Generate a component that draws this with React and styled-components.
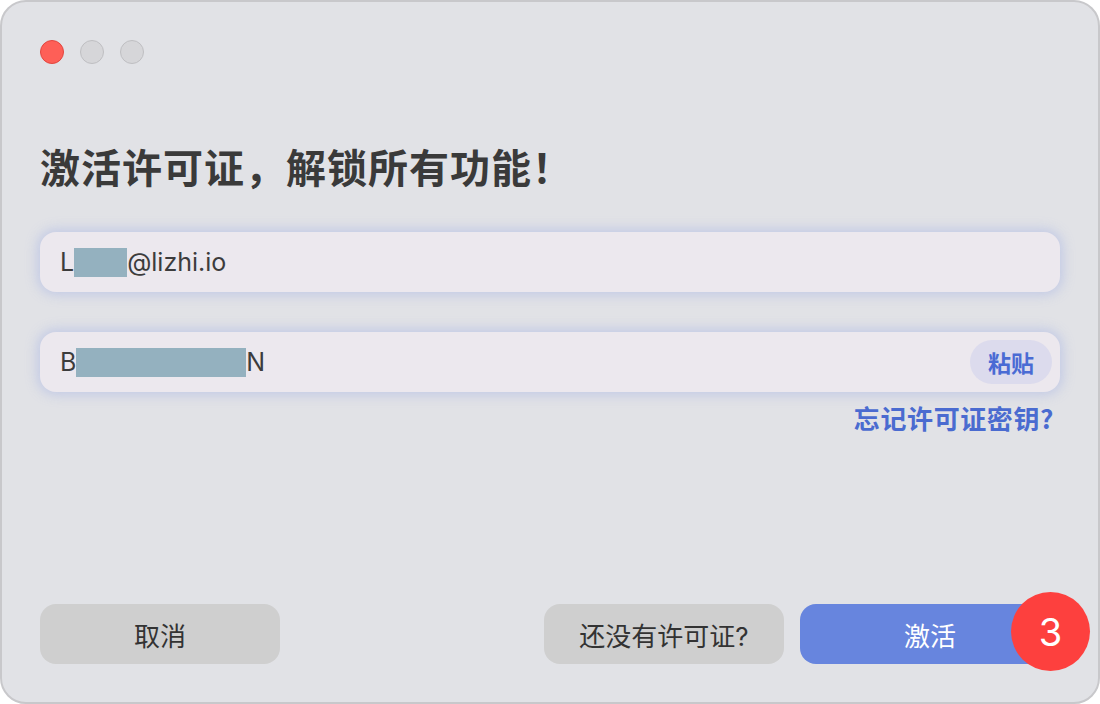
import React from "react";
import styled, { createGlobalStyle } from "styled-components";

const Global = createGlobalStyle`
  html, body { margin: 0; padding: 0; background: #ffffff; }
  body { font-family: "Inter", "Noto Sans CJK SC", sans-serif; }
  * { box-sizing: border-box; }
`;

const Window = styled.div`
  width: 1100px;
  height: 704px;
  background: #e1e2e6;
  border: 2px solid #c8c8cb;
  border-radius: 26px;
  padding: 38px 38px 38px 38px;
  display: flex;
  flex-direction: column;
  overflow: hidden;
`;

const Lights = styled.div`
  display: flex;
  gap: 16px;
  height: 24px;
`;

const Light = styled.span`
  width: 24px;
  height: 24px;
  border-radius: 50%;
  background: ${(p) => (p.$red ? "#fe5f57" : "#d6d6d9")};
  border: 1px solid ${(p) => (p.$red ? "#e2463f" : "#bfbfc2")};
`;

const Title = styled.h1`
  margin: 78px 0 0 0;
  font-family: "Noto Sans CJK SC", sans-serif;
  font-weight: 700;
  font-size: 40px;
  letter-spacing: 1px;
  line-height: 48px;
  color: #3a3a3a;
`;

const Field = styled.div`
  margin-top: ${(p) => p.$mt}px;
  height: 60px;
  border-radius: 16px;
  background: #ece8ee;
  box-shadow: 0 0 12px 3px rgba(145, 162, 228, 0.38);
  display: flex;
  align-items: center;
  padding: 0 8px 0 20px;
  font-family: "Inter", "Noto Sans CJK SC", sans-serif;
  font-size: 25px;
  color: #3c3c3c;
`;

const Value = styled.span`
  flex: 1;
  display: flex;
  align-items: center;
`;

const Redact = styled.span`
  display: inline-block;
  width: ${(p) => p.$w}px;
  height: 29px;
  background: #94b1bf;
`;

const PasteButton = styled.button`
  width: 82px;
  height: 44px;
  border: none;
  border-radius: 22px;
  background: #dcdbed;
  color: #4a6bd4;
  font-family: "Noto Sans CJK SC", sans-serif;
  font-weight: 700;
  font-size: 23px;
  padding: 0;
  cursor: pointer;
`;

const LinkRow = styled.div`
  margin-top: 10px;
  display: flex;
  justify-content: flex-end;
  padding-right: 6px;
`;

const Link = styled.a`
  font-family: "Noto Sans CJK SC", sans-serif;
  font-weight: 700;
  font-size: 26px;
  letter-spacing: 0.6px;
  line-height: 32px;
  color: #4a6bd0;
  text-decoration: none;
`;

const Footer = styled.div`
  margin-top: auto;
  display: flex;
  align-items: center;
  gap: 16px;
`;

const Button = styled.button`
  position: relative;
  width: ${(p) => p.$w}px;
  height: 60px;
  border: none;
  border-radius: 16px;
  background: ${(p) => (p.$primary ? "#6785de" : "#cfcfcf")};
  color: ${(p) => (p.$primary ? "#ffffff" : "#333333")};
  font-family: "Inter", "Noto Sans CJK SC", sans-serif;
  font-size: 26px;
  padding: 0;
  margin-left: ${(p) => (p.$push ? "auto" : "0")};
  cursor: pointer;
`;

const Badge = styled.span`
  position: absolute;
  right: -30px;
  top: -12px;
  width: 79px;
  height: 79px;
  border-radius: 50%;
  background: #fd403e;
  color: #ffffff;
  display: flex;
  align-items: center;
  justify-content: center;
  font-family: "Inter", sans-serif;
  font-size: 38px;
`;

export default function App() {
  return (
    <>
      <Global />
      <Window>
        <Lights>
          <Light $red />
          <Light />
          <Light />
        </Lights>
        <Title>激活许可证，解锁所有功能！</Title>
        <Field $mt={42}>
          <Value>
            L<Redact $w={53} />@lizhi.io
          </Value>
        </Field>
        <Field $mt={40}>
          <Value>
            B<Redact $w={170} />N
          </Value>
          <PasteButton>粘贴</PasteButton>
        </Field>
        <LinkRow>
          <Link href="#">忘记许可证密钥?</Link>
        </LinkRow>
        <Footer>
          <Button $w={240}>取消</Button>
          <Button $w={240} $push>还没有许可证?</Button>
          <Button $w={260} $primary>
            激活
            <Badge>3</Badge>
          </Button>
        </Footer>
      </Window>
    </>
  );
}
